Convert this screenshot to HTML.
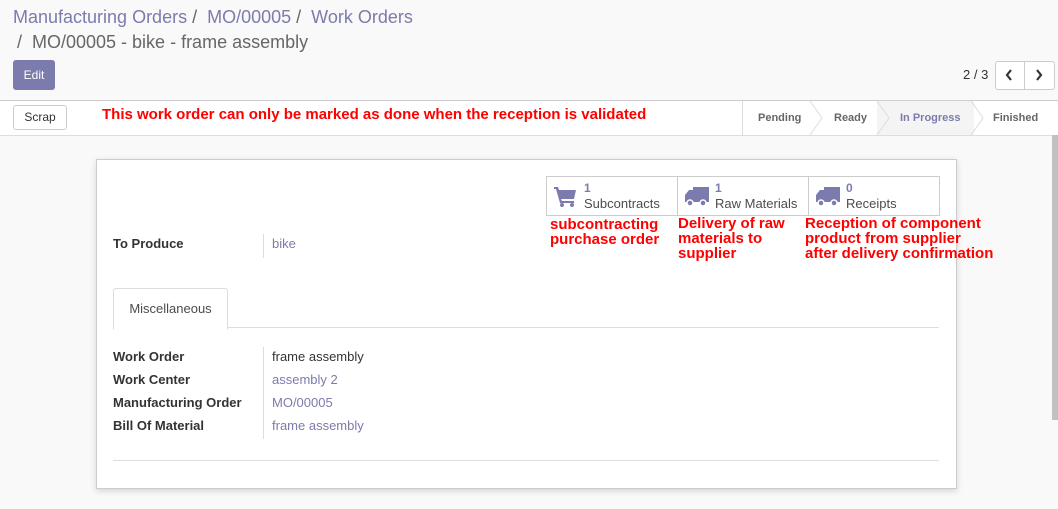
<!DOCTYPE html>
<html><head><meta charset="utf-8"><style>
body{margin:0;width:1058px;height:509px;overflow:hidden;font-family:"Liberation Sans",sans-serif;background:#f9f9f9;position:relative;font-size:13px;color:#4c4c4c}
.a{position:absolute}
.bc{color:#7c7bad;font-size:18px}
.red{color:#f00;font-weight:bold;font-size:15px;line-height:15px}
.lbl{font-weight:bold;color:#333}
.lnk{color:#7c7bad}
</style></head><body>
<div class="a bc" style="left:13px;top:7px">Manufacturing Orders <span style="color:#666">/</span>&nbsp; MO/00005 <span style="color:#666">/</span>&nbsp; Work Orders</div>
<div class="a" style="left:17px;top:32px;font-size:18px;color:#666">/&nbsp; MO/00005 - bike - frame assembly</div>
<div class="a" style="left:13px;top:60px;width:42px;height:30px;background:#7c7bad;border-radius:3px;color:#fff;font-size:12px;line-height:30px;text-align:center">Edit</div>
<div class="a" style="left:963px;top:67px;font-size:13px;color:#333">2 / 3</div>
<div class="a" style="left:995px;top:61px;width:58px;height:27px;border:1px solid #ccc;border-radius:3px;background:#fff"></div>
<div class="a" style="left:1024px;top:61px;width:1px;height:29px;background:#ccc"></div>
<svg class="a" style="left:1004px;top:68px" width="10" height="14"><path d="M7 2L3 7l4 5" fill="none" stroke="#333" stroke-width="2.2"/></svg>
<svg class="a" style="left:1034px;top:68px" width="10" height="14"><path d="M3 2l4 5-4 5" fill="none" stroke="#333" stroke-width="2.2"/></svg>
<div class="a" style="left:0;top:100px;width:1058px;height:34px;background:#fff;border-top:1px solid #ccc;border-bottom:1px solid #ddd"></div>
<div class="a" style="left:13px;top:105px;width:52px;height:23px;border:1px solid #ccc;border-radius:3px;background:#fff;text-align:center;line-height:23px;font-size:12px;color:#333">Scrap</div>
<div class="a red" style="left:102px;top:107px">This work order can only be marked as done when the reception is validated</div>
<div class="a" style="left:742px;top:101px;width:1px;height:34px;background:#ddd"></div>
<div class="a" style="left:877px;top:101px;width:97px;height:34px;background:#f4f4f4"></div>
<svg class="a" style="left:742px;top:101px" width="316" height="34"><g fill="none" stroke="#ddd"><path d="M68 0l12 17-12 17M135 0l12 17-12 17M229 0l12 17-12 17"/></g></svg>
<div class="a" style="left:758px;top:112px;font-size:11px;font-weight:bold;color:#666">Pending</div>
<div class="a" style="left:834px;top:112px;font-size:11px;font-weight:bold;color:#666">Ready</div>
<div class="a" style="left:900px;top:112px;font-size:11px;font-weight:bold;color:#7c7bad">In Progress</div>
<div class="a" style="left:993px;top:112px;font-size:11px;font-weight:bold;color:#666">Finished</div>
<div class="a" style="left:1052px;top:135px;width:6px;height:285px;background:#c1c1c1"></div>
<div class="a" style="left:96px;top:159px;width:859px;height:328px;background:#fff;border:1px solid #ccc;box-shadow:0 2px 6px rgba(0,0,0,.15)"></div>
<div class="a" style="left:546px;top:176px;width:392px;height:38px;border:1px solid #ccc"></div>
<div class="a" style="left:677px;top:176px;width:1px;height:40px;background:#ccc"></div>
<div class="a" style="left:808px;top:176px;width:1px;height:40px;background:#ccc"></div>
<svg class="a" style="left:554px;top:187px" width="24" height="20" viewBox="0 0 24 20"><path fill="#7c7bad" d="M0 0h4l1 3h17l-2 9H7l1 2h12v2H6L2 2H0z"/><circle cx="8" cy="18" r="2" fill="#7c7bad"/><circle cx="18" cy="18" r="2" fill="#7c7bad"/></svg>
<svg class="a" style="left:685px;top:187px" width="24" height="20" viewBox="0 0 24 20"><path fill="#7c7bad" d="M8 0h16v15H0V8l4-5h4z"/><circle cx="5" cy="16" r="3" fill="#7c7bad" stroke="#fff" stroke-width="1.5"/><circle cx="18" cy="16" r="3" fill="#7c7bad" stroke="#fff" stroke-width="1.5"/></svg>
<svg class="a" style="left:816px;top:187px" width="24" height="20" viewBox="0 0 24 20"><path fill="#7c7bad" d="M8 0h16v15H0V8l4-5h4z"/><circle cx="5" cy="16" r="3" fill="#7c7bad" stroke="#fff" stroke-width="1.5"/><circle cx="18" cy="16" r="3" fill="#7c7bad" stroke="#fff" stroke-width="1.5"/></svg>
<div class="a" style="left:584px;top:181px;font-size:12px;font-weight:bold;color:#7c7bad">1</div>
<div class="a" style="left:584px;top:196px;color:#4c4c4c">Subcontracts</div>
<div class="a" style="left:715px;top:181px;font-size:12px;font-weight:bold;color:#7c7bad">1</div>
<div class="a" style="left:715px;top:196px;color:#4c4c4c">Raw Materials</div>
<div class="a" style="left:846px;top:181px;font-size:12px;font-weight:bold;color:#7c7bad">0</div>
<div class="a" style="left:846px;top:196px;color:#4c4c4c">Receipts</div>
<div class="a red" style="left:550px;top:217px">subcontracting<br>purchase order</div>
<div class="a red" style="left:678px;top:216px">Delivery of raw<br>materials to<br>supplier</div>
<div class="a red" style="left:805px;top:216px">Reception of component<br>product from supplier<br>after delivery confirmation</div>
<div class="a lbl" style="left:113px;top:236px">To Produce</div>
<div class="a" style="left:263px;top:234px;width:1px;height:24px;background:#ddd"></div>
<div class="a lnk" style="left:272px;top:236px">bike</div>
<div class="a" style="left:113px;top:327px;width:826px;height:1px;background:#ddd"></div>
<div class="a" style="left:113px;top:288px;width:113px;height:40px;border:1px solid #ddd;border-bottom:1px solid #fff;background:#fff;border-radius:3px 3px 0 0;text-align:center;line-height:40px;color:#4c4c4c">Miscellaneous</div>
<div class="a" style="left:263px;top:347px;width:1px;height:92px;background:#ddd"></div>
<div class="a lbl" style="left:113px;top:349px">Work Order</div><div class="a" style="left:272px;top:349px;color:#333">frame assembly</div>
<div class="a lbl" style="left:113px;top:372px">Work Center</div><div class="a lnk" style="left:272px;top:372px">assembly 2</div>
<div class="a lbl" style="left:113px;top:395px">Manufacturing Order</div><div class="a lnk" style="left:272px;top:395px">MO/00005</div>
<div class="a lbl" style="left:113px;top:418px">Bill Of Material</div><div class="a lnk" style="left:272px;top:418px">frame assembly</div>
<div class="a" style="left:113px;top:460px;width:826px;height:1px;background:#ddd"></div>
</body></html>
